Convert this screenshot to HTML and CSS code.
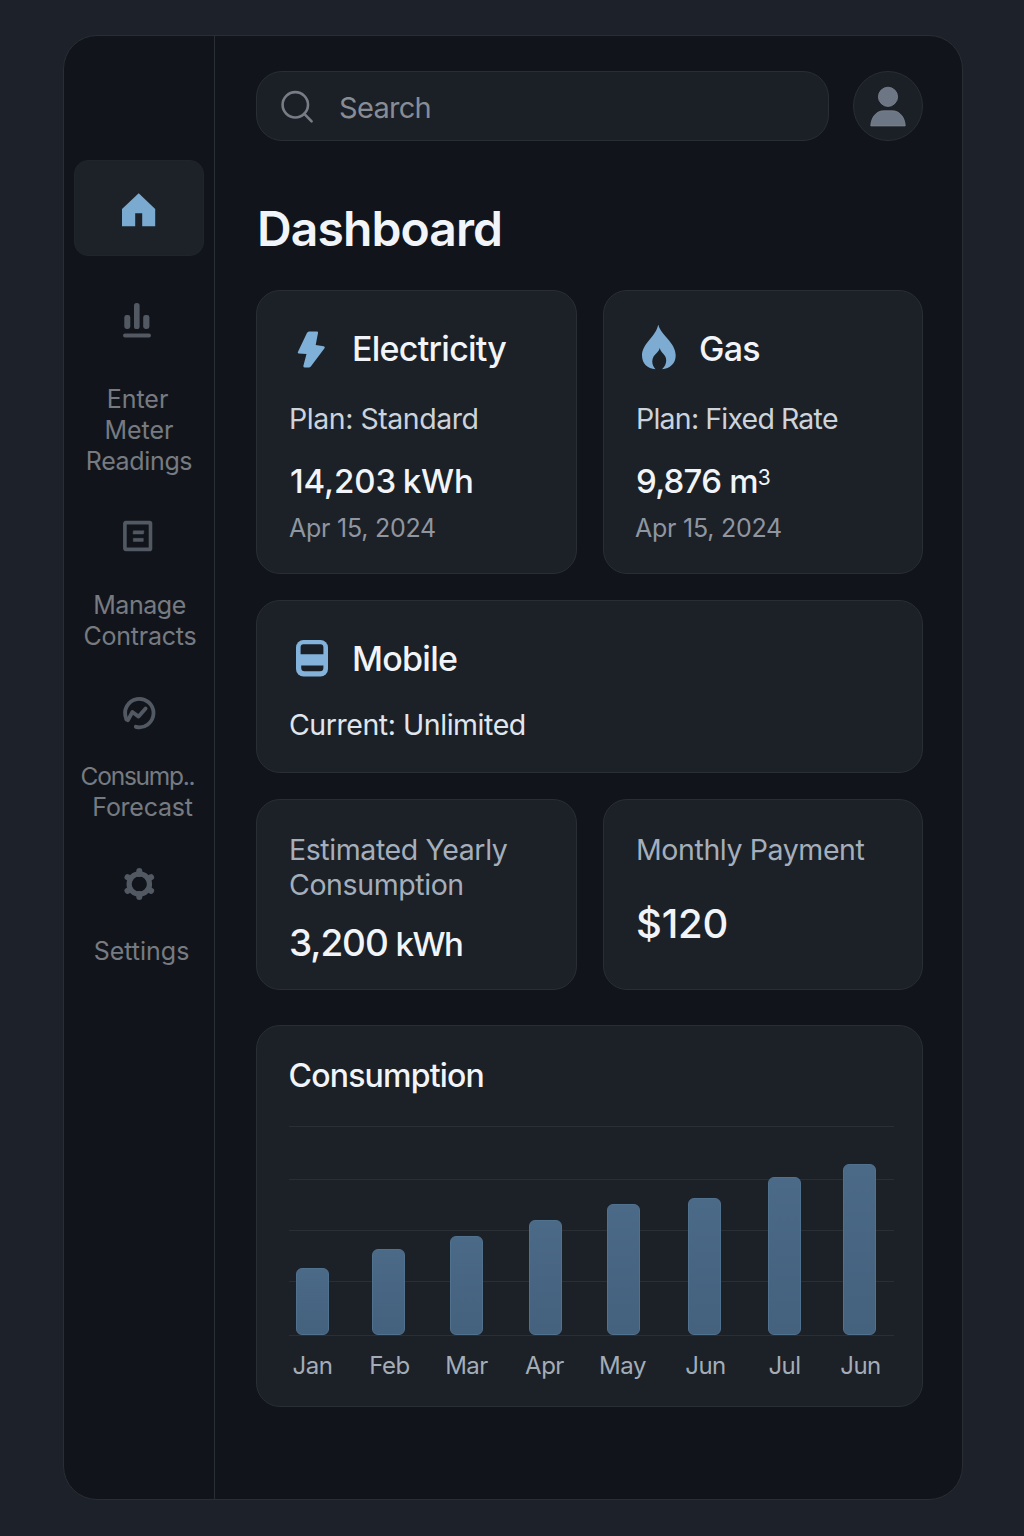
FILE: index.html
```html
<!DOCTYPE html>
<html lang="en">
<head>
<meta charset="utf-8">
<title>Dashboard</title>
<link rel="stylesheet" href="styles.css">
</head>
<body>
<div class="app">
  <nav class="sidebar">
    <a class="nav-home">
      <svg width="36" height="36" viewBox="0 0 36 36"><path d="M17.700 1.300 34.200 17V34.200H21.200V21.200h-7v13H1V17Z" fill="#7aaacf"/></svg>
    </a>
    <a class="nav-item nav-readings">
      <svg width="36" height="36" viewBox="0 0 36 36" fill="#525962"><rect x="3.300" y="13" width="6" height="14" rx="2.400"/><rect x="13" y="1" width="5.600" height="26" rx="2.600"/><rect x="22.200" y="13" width="6.200" height="14" rx="2.400"/><rect x="2" y="31.400" width="28" height="4" rx="2"/></svg>
      <span class="line-enter">Enter</span><span>Meter</span><span class="line-readings">Readings</span>
    </a>
    <a class="nav-item nav-contracts">
      <svg width="36" height="36" viewBox="0 0 36 36" fill="none" stroke="#525962"><rect x="3.900" y="4.600" width="25.600" height="26.800" rx="1" stroke-width="3.600"/><path d="M12.300 12.800H23l-.6 3.200H12ZM12.300 20.300h10v3.100h-10Z" fill="#525962" stroke-width=".5" stroke-linejoin="round"/></svg>
      <span class="line-manage">Manage</span><span class="line-contracts">Contracts</span>
    </a>
    <a class="nav-item nav-forecast">
      <svg width="36" height="36" viewBox="0 0 36 36" fill="none" stroke="#525962" stroke-width="3.800" stroke-linecap="round" stroke-linejoin="round"><path d="M5.200 23.500A14.200 14.200 0 1 1 14.800 31.800"/><path d="M5.400 24.500 7 25.200 11.400 17 17.600 21.600 24.600 13.400"/></svg>
      <span class="line-consump">Consump..</span><span class="line-forecast">Forecast</span>
    </a>
    <a class="nav-item nav-settings">
      <svg width="36" height="36" viewBox="0 0 36 36" fill="none" stroke="#525962"><circle cx="18.300" cy="18" r="10.200" stroke-width="5.200"/><path d="M18.300 5v3M18.300 28v3M6.500 11.200l2.600 1.500M27.500 23.300l2.600 1.500M6.500 24.800l2.600-1.500M27.500 12.700l2.600-1.500" stroke-width="6" stroke-linecap="round"/></svg>
      <span class="line-settings">Settings</span>
    </a>
  </nav>

  <main class="content">
    <header class="topbar">
      <div class="search">
        <svg width="36" height="36" viewBox="0 0 36 36" fill="none" stroke="#777c85" stroke-width="2.600" stroke-linecap="round"><circle cx="16.300" cy="16.800" r="12.700"/><path d="m25.300 25.800 7.300 7.600"/></svg>
        <span>Search</span>
      </div>
      <div class="avatar">
        <svg width="40" height="44" viewBox="0 0 40 44" fill="#6d7684" stroke="#7d8592" stroke-width=".8"><circle cx="20" cy="12.800" r="9.600"/><path d="M2.800 41.900C3 34 8 26.800 15.500 26.800h9c7.500 0 12.500 7.200 12.700 15.100Z"/></svg>
      </div>
    </header>

    <h1>Dashboard</h1>

    <section class="row">
      <article class="card">
        <div class="card-title">
          <svg width="44" height="48" viewBox="0 0 44 48"><path transform="translate(.5 .5)" d="M20.600 6H28.400Q29.900 6 29.500 7.400L27.200 19.600 35.200 20.800Q37 21.100 36 22.800L22.700 40.600Q21.900 41.900 20.600 41.900H16.100Q14.500 41.900 14.900 40.200L18 28.600 10.200 28.100Q8.600 27.900 9.500 26.300L18.300 7.700Q19.200 6 20.600 6Z" fill="#7fb0d8"/></svg>
          <h2>Electricity</h2>
        </div>
        <p class="plan">Plan: Standard</p>
        <p class="reading">14,203 kWh</p>
        <p class="date">Apr 15, 2024</p>
      </article>
      <article class="card">
        <div class="card-title">
          <svg width="44" height="48" viewBox="0 0 44 48"><path transform="translate(1 -1)" d="M22.200 0C23.500 10 39.700 18 39.700 31.500 39.700 39.500 34 44.500 26 45.200 30 41.500 31.500 36 29 32 27.200 29 24.300 27.500 23.700 24 23.100 27.500 19.500 29.500 17.600 32.500 15 37 16.500 42 19.500 45.200 11.500 44.800 6 39.500 6 31.500 6 19 21 12 22.200 0Z" fill="#7eabd2"/></svg>
          <h2>Gas</h2>
        </div>
        <p class="plan rate">Plan: Fixed Rate</p>
        <p class="reading volume">9,876 m<sup>3</sup></p>
        <p class="date">Apr 15, 2024</p>
      </article>
    </section>

    <section class="card mobile">
      <div class="card-title">
        <svg width="44" height="48" viewBox="0 0 44 48"><rect x="8" y="5" width="32" height="36.500" rx="7.500" fill="#83b3da"/><path d="M12.600 19.200V12.200Q12.600 9.300 15.500 9.300H32.500Q35.400 9.300 35.400 12.200V19.200ZM13.200 30.500H35.400V32.700Q35.400 36.300 32 36.300H16.600Q13.200 36.300 13.200 32.700Z" fill="#1a2028"/></svg>
        <h2>Mobile</h2>
      </div>
      <p class="plan">Current: Unlimited</p>
    </section>

    <section class="row stats">
      <article class="card stat">
        <p class="stat-label">Estimated Yearly<br>Consumption</p>
        <p class="stat-value">3,200 <span>kWh</span></p>
      </article>
      <article class="card stat">
        <p class="stat-label">Monthly Payment</p>
        <p class="stat-value money">$120</p>
      </article>
    </section>

    <section class="card chart">
      <h3>Consumption</h3>
      <div class="plot">
        <div class="month"><i style="height:67px"></i><b>Jan</b></div>
        <div class="month"><i style="height:86px"></i><b>Feb</b></div>
        <div class="month"><i style="height:99px"></i><b>Mar</b></div>
        <div class="month"><i style="height:115px"></i><b>Apr</b></div>
        <div class="month"><i style="height:131px"></i><b>May</b></div>
        <div class="month"><i style="height:137px"></i><b>Jun</b></div>
        <div class="month"><i style="height:158px"></i><b>Jul</b></div>
        <div class="month"><i style="height:171px"></i><b>Jun</b></div>
      </div>
    </section>
  </main>
</div>
</body>
</html>
```
FILE: styles.css
```css
* { box-sizing: border-box; }
body {
  margin: 0;
  min-height: 1536px;
  padding: 35px 61px 36px 63px;
  background: #1d2129;
  font-family: Inter, "Liberation Sans", sans-serif;
  color: #f1f4f8;
}
h1, h2, h3, p { margin: 0; white-space: nowrap; }
svg { display: block; flex: none; }

.app {
  display: flex;
  height: 1465px;
  border: 1px solid #292d34;
  border-radius: 34px;
  background: #11151b;
}

/* Sidebar */
.sidebar {
  flex: none;
  width: 151px;
  padding: 124px 10px 0;
  border-right: 1px solid #292d34;
}
.nav-home {
  display: flex;
  align-items: center;
  justify-content: center;
  height: 96px;
  width: 130px;
  padding-top: 4px;
  border: 1px solid #20252c;
  border-radius: 14px;
  background: #1d2229;
}
.nav-item {
  display: flex;
  flex-direction: column;
  align-items: center;
  width: 130px;
  font-size: 25px;
  line-height: 31px;
  color: #777b81;
  white-space: nowrap;
}
.nav-item svg { margin-bottom: var(--gap); }
.nav-readings { --gap: 46px; margin-top: 46px; }
.nav-contracts { --gap: 36px; margin-top: 41px; }
.nav-forecast { --gap: 30px; margin-top: 43px; }
.nav-settings { --gap: 34px; margin-top: 43px; }
.line-enter { margin-right: 3px; }
.line-readings { letter-spacing: -0.35px; }
.line-manage { margin-left: 1px; letter-spacing: -0.45px; }
.line-contracts { margin-left: 2px; letter-spacing: -0.25px; }
.line-consump { margin-right: 3px; font-size: 24.5px; letter-spacing: -1.25px; }
.line-forecast { margin-left: 7px; letter-spacing: -0.25px; }
.line-settings { margin-left: 5px; }

/* Main column */
.content {
  flex: none;
  width: 708px;
  padding: 35px 0 0 41px;
}
.topbar { display: flex; justify-content: space-between; }
.search {
  display: flex;
  align-items: center;
  gap: 24px;
  width: 573px;
  height: 70px;
  padding: 0 0 0 22px;
  border: 1px solid #292d34;
  border-radius: 26px;
  background: #1b1f26;
  font-size: 29px;
  letter-spacing: -0.7px;
  color: #888c95;
}
.search span { padding-top: 2px; }
.avatar {
  display: flex;
  align-items: center;
  justify-content: center;
  width: 70px;
  height: 70px;
  border: 1px solid #292d34;
  border-radius: 50%;
  background: #1b1f26;
}
h1 {
  margin: 58px 0 31px 1px;
  font-size: 48px;
  font-weight: 600;
  letter-spacing: -0.9px;
  line-height: 60px;
}
.row {
  display: grid;
  grid-template-columns: 321px 320px;
  justify-content: space-between;
}
.card {
  padding: 36px 30px 0 32px;
  border: 1px solid #292d34;
  border-radius: 24px;
  background: #1c2027;
}
.row .card { height: 284px; }
.card-title {
  display: flex;
  align-items: center;
  gap: 19px;
  height: 44px;
  margin-left: -1px;
}
.card-title h2 { padding-left: 1px; }
h2 { font-size: 34px; font-weight: 500; letter-spacing: -0.75px; line-height: 44px; }
.plan {
  margin-top: 30px;
  font-size: 28.5px;
  letter-spacing: -0.45px;
  line-height: 36px;
  color: #ccd3db;
}
.rate { letter-spacing: -0.75px; word-spacing: -0.5px; }
.reading {
  margin-top: 24px;
  padding-left: 1px;
  font-size: 33px;
  font-weight: 500;
  letter-spacing: -0.1px;
  word-spacing: -2px;
  line-height: 40px;
}
.volume { padding-left: 0; letter-spacing: -0.75px; word-spacing: 0; }
.reading sup {
  font-size: 21px;
  font-weight: 400;
  line-height: 0;
  vertical-align: 8px;
}
.date {
  margin-top: 11px;
  font-size: 25px;
  letter-spacing: -0.25px;
  line-height: 32px;
  color: #8f96a1;
}
.volume + .date { margin-left: -1px; }
.mobile { height: 173px; margin-top: 26px; }
.mobile .plan { margin-top: 26px; color: #e0e6ee; }

.stats { margin-top: 26px; }
.row .stat { height: 191px; padding-top: 32px; }
.stat-label { font-size: 28.5px; letter-spacing: -0.4px; line-height: 35px; color: #a5afbb; }
.stat-value {
  margin-top: 17px;
  font-size: 37px;
  font-weight: 500;
  letter-spacing: -1.1px;
  line-height: 48px;
}
.stat-value span { margin-left: -1px; font-size: 33px; letter-spacing: -1.5px; }
.money { margin-top: 33px; font-size: 40px; letter-spacing: -0.2px; }

/* Chart */
.chart { height: 382px; margin-top: 35px; padding-top: 30px; }
h3 { margin-left: -0.5px; font-size: 32px; font-weight: 500; letter-spacing: -0.8px; line-height: 40px; }
.plot {
  display: flex;
  align-items: flex-end;
  width: 605px;
  height: 210px;
  margin-top: 30px;
  padding-left: 7px;
  background:
    linear-gradient(#2a2f35, #2a2f35) 0 0 / 100% 1px no-repeat,
    linear-gradient(#2a2f35, #2a2f35) 0 53px / 100% 1px no-repeat,
    linear-gradient(#2a2f35, #2a2f35) 0 104px / 100% 1px no-repeat,
    linear-gradient(#2a2f35, #2a2f35) 0 155px / 100% 1px no-repeat,
    linear-gradient(#2a2f35, #2a2f35) 0 209px / 100% 1px no-repeat;
}
.month {
  display: flex;
  flex-direction: column;
  align-items: center;
  width: 33px;
  margin-bottom: -47px;
}
.month i {
  width: 33px;
  border: 1px solid #51728f;
  border-radius: 6px;
  background: linear-gradient(#4b6a88, #44617d);
}
.month b {
  margin: 15px 0 1px;
  font-size: 24px;
  font-weight: 400;
  letter-spacing: -0.5px;
  line-height: 32px;
  color: #a3adb9;
}
.month:nth-child(2) { margin-left: 43px; }
.month:nth-child(3) { margin-left: 45px; }
.month:nth-child(4) { margin-left: 46px; }
.month:nth-child(5) { margin-left: 45px; }
.month:nth-child(6) { margin-left: 48px; }
.month:nth-child(7) { margin-left: 47px; }
.month:nth-child(8) { margin-left: 42px; }
.month:nth-child(2) b,
.month:nth-child(6) b,
.month:nth-child(8) b { padding-left: 2px; }
.month:nth-child(4) b,
.month:nth-child(5) b { padding-right: 2px; }
```
